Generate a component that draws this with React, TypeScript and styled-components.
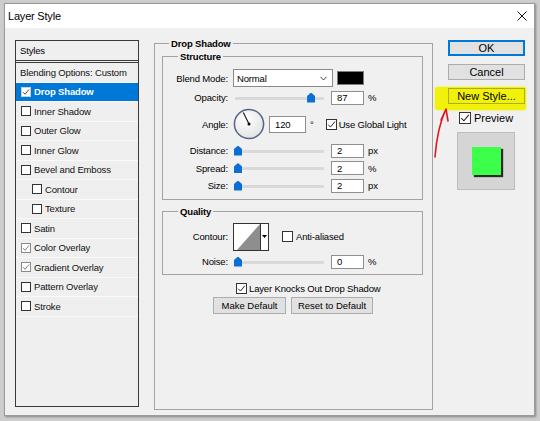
import React from 'react'
import styled, { createGlobalStyle } from 'styled-components'

const GlobalStyle = createGlobalStyle`
  html, body {
    margin: 0;
    padding: 0;
  }
  body {
    width: 540px;
    height: 421px;
    overflow: hidden;
    background: #cdcdcd;
    font-family: 'Liberation Sans', Arial, sans-serif;
    color: #000;
  }
`

const Screen = styled.div`
  position: relative;
  width: 540px;
  height: 421px;
  box-sizing: border-box;
  padding: 3px 0 0 4px;
`

const Dialog = styled.div`
  width: 531px;
  height: 413px;
  box-sizing: border-box;
  border: 1px solid #9a9a9a;
  background: #f0f0f0;
  box-shadow: 1px 1px 2px rgba(0, 0, 0, 0.35);
  display: flex;
  flex-direction: column;
`

const TitleBar = styled.div`
  height: 24px;
  flex: none;
  background: #fff;
  display: flex;
  align-items: center;
  justify-content: space-between;
  padding: 0 7px 0 3px;
  font-size: 11px;
  letter-spacing: -0.2px;
`

const Body = styled.div`
  flex: 1;
  display: flex;
  align-items: stretch;
  gap: 15px;
  padding: 12px 9px 5px 10px;
  font-size: 9.5px;
  letter-spacing: -0.15px;
`

/* ---------- styles list ---------- */

const StylesPanel = styled.div`
  width: 124px;
  flex: none;
  box-sizing: border-box;
  margin-bottom: 3px;
  border: 1px solid #3a3a3a;
  background: #efefef;
  display: flex;
  flex-direction: column;
`

const PanelHeader = styled.div`
  height: 19px;
  flex: none;
  display: flex;
  align-items: center;
  padding-left: 4px;
  border-bottom: 3px double #3a3a3a;
`

const StyleRow = styled.div<{ $selected?: boolean; $indent?: boolean }>`
  height: 19.5px;
  flex: none;
  box-sizing: border-box;
  display: flex;
  align-items: center;
  gap: 3px;
  padding-left: ${p => (p.$indent ? 16 : 5)}px;
  border-bottom: 1px solid #fafafa;
  background: ${p => (p.$selected ? '#0078d7' : 'transparent')};
  color: ${p => (p.$selected ? '#fff' : '#111')};
  font-weight: ${p => (p.$selected ? 700 : 400)};
`

const PlainRow = styled(StyleRow)`
  padding-left: 4px;
`

/* ---------- checkbox ---------- */

type Tone = 'dark' | 'muted' | 'light'

const toneBorder: Record<Tone, string> = { dark: '#333', muted: '#8a8a8a', light: '#cfcfcf' }
const toneCheck: Record<Tone, string> = { dark: '#222', muted: '#707070', light: '#333' }

const Box = styled.span<{ $size: number; $tone: Tone }>`
  width: ${p => p.$size}px;
  height: ${p => p.$size}px;
  flex: none;
  box-sizing: border-box;
  border: 1px solid ${p => toneBorder[p.$tone]};
  background: #fff;
  display: inline-flex;
  align-items: center;
  justify-content: center;
`

const CheckBox: React.FC<{ checked?: boolean; size?: number; tone?: Tone }> = ({
  checked,
  size = 11,
  tone = 'dark',
}) => (
  <Box $size={size} $tone={tone}>
    {checked && (
      <svg width={size - 2} height={size - 2} viewBox="0 0 10 10">
        <polyline points="1.3,5.2 3.9,7.8 8.8,1.8" fill="none" stroke={toneCheck[tone]} strokeWidth="1.1" />
      </svg>
    )}
  </Box>
)

/* ---------- group boxes ---------- */

const Group = styled.fieldset<{ $outer?: boolean }>`
  margin: 0;
  min-width: 0;
  box-sizing: border-box;
  border: 1px solid #a3a3a3;
  padding: ${p => (p.$outer ? '0 9px 0 7px' : '0')};
`

const OuterGroup = styled(Group)`
  width: 279px;
  flex: none;
  margin-top: -3px;
`

const GroupTitle = styled.legend<{ $offset: number }>`
  font-weight: 700;
  font-size: 9.5px;
  line-height: 13px;
  padding: 0 2px;
  margin-left: ${p => p.$offset}px;
`

const Rows = styled.div<{ $gap: number; $pad: string }>`
  display: flex;
  flex-direction: column;
  gap: ${p => p.$gap}px;
  padding: ${p => p.$pad};
`

const Field = styled.div`
  display: grid;
  grid-template-columns: 65px auto;
  column-gap: 5px;
  align-items: center;
`

const Label = styled.span`
  text-align: right;
  white-space: nowrap;
`

const Controls = styled.div<{ $gap?: number }>`
  display: flex;
  align-items: center;
  gap: ${p => p.$gap ?? 4}px;
`

const Select = styled.div`
  width: 100px;
  height: 18px;
  box-sizing: border-box;
  border: 1px solid #8a8a8a;
  background: #fff;
  display: flex;
  align-items: center;
  justify-content: space-between;
  padding: 0 5px 0 3px;
`

const Swatch = styled.span`
  width: 27px;
  height: 14px;
  box-sizing: border-box;
  border: 1px solid #7d7d7d;
  background: #000;
`

const NumberBox = styled.div<{ $w: number; $h: number }>`
  width: ${p => p.$w}px;
  height: ${p => p.$h}px;
  flex: none;
  box-sizing: border-box;
  border: 1px solid #8f8f8f;
  background: #fff;
  display: flex;
  align-items: center;
  padding-left: 5px;
`

const Track = styled.div`
  position: relative;
  width: 91px;
  height: 10px;
  flex: none;
  margin-right: 3px;

  &::before {
    content: '';
    position: absolute;
    left: 2px;
    right: 0;
    top: 4px;
    height: 3px;
    background: #d9d9d9;
  }
`

const Thumb = styled.span`
  position: absolute;
  top: 0;
  width: 8px;
  height: 10px;
  background: #0a6fd3;
  clip-path: polygon(50% 0, 100% 35%, 100% 100%, 0 100%, 0 35%);
`

const Unit = styled.span`
  margin-left: 0;
`

const Slider: React.FC<{ pos: number; value: string; unit: string }> = ({ pos, value, unit }) => (
  <Controls>
    <Track>
      <Thumb style={{ left: 1 + pos * 84 }} />
    </Track>
    <NumberBox $w={33} $h={14}>{value}</NumberBox>
    <Unit>{unit}</Unit>
  </Controls>
)

const Dial = () => (
  <svg width="32" height="32" viewBox="0 0 32 32">
    <defs>
      <radialGradient id="dialFill" cx="40%" cy="35%" r="70%">
        <stop offset="0" stopColor="#ffffff" />
        <stop offset="1" stopColor="#e2e2e2" />
      </radialGradient>
    </defs>
    <circle cx="16" cy="16" r="14.6" fill="url(#dialFill)" stroke="#55648c" strokeWidth="1.5" />
    <line x1="16" y1="16" x2="10.3" y2="4.4" stroke="#111" strokeWidth="1.1" />
    <circle cx="16" cy="16" r="1.5" fill="#000" />
  </svg>
)

const ContourPicker = styled.div`
  width: 36px;
  height: 28px;
  box-sizing: border-box;
  border: 1px solid #333;
  background: #fff;
  display: flex;
`

const ContourArrow = styled.span`
  flex: 1;
  border-left: 1px solid #333;
  display: flex;
  align-items: center;
  justify-content: center;
`

const CheckLabel = styled.label<{ $gap?: number }>`
  display: flex;
  align-items: center;
  gap: ${p => p.$gap ?? 2}px;
  white-space: nowrap;
`

const KnockRow = styled(CheckLabel)`
  margin: 8px 0 0 74px;
`

const ButtonRow = styled.div`
  display: flex;
  gap: 5px;
  margin: 3px 0 0 51px;
`

const SmallButton = styled.button<{ $w: number }>`
  width: ${p => p.$w}px;
  height: 17px;
  padding: 0;
  font: inherit;
  color: #000;
  background: #e1e1e1;
  border: 1px solid #adadad;
`

/* ---------- right column ---------- */

const SideColumn = styled.div`
  width: 77px;
  flex: none;
  display: flex;
  flex-direction: column;
  gap: 8px;
  font-size: 11px;
  letter-spacing: 0;
`

const DialogButton = styled.button<{ $default?: boolean; $marked?: boolean }>`
  width: 77px;
  height: 16px;
  padding: 0;
  font-family: inherit;
  font-size: 11px;
  line-height: 14px;
  color: #000;
  background: ${p => (p.$marked ? 'transparent' : '#e1e1e1')};
  border: 1px solid ${p => (p.$default ? '#0078d7' : p.$marked ? 'rgba(90,90,60,0.45)' : '#adadad')};
  box-shadow: ${p => (p.$default ? 'inset 0 0 0 1px #0078d7' : 'none')};
`

const Marker = styled.div`
  margin: -1px -1px -6px -13px;
  padding: 1px 1px 6px 13px;
  background: #f1f10c;
  border-radius: 3px;
  box-shadow: 0 0 2px #f1f10c;
`

const PreviewRow = styled(CheckLabel)`
  margin-left: 11px;
  gap: 3px;
  height: 12px;
`

const PreviewBox = styled.div`
  width: 58px;
  height: 58px;
  margin-left: 9px;
  box-sizing: border-box;
  border: 1px solid #bdbdbd;
  background: #d5d5d5;
  display: flex;
  align-items: center;
  justify-content: center;
`

const PreviewSquare = styled.span`
  width: 29px;
  height: 28px;
  background: #3cff4a;
  box-shadow: 2px 2px 1px #2a2a2a;
`

const Annotation = styled.svg`
  position: absolute;
  left: 428px;
  top: 104px;
`

const App: React.FC = () => {
  const styleItems: { name: string; checked?: boolean; indent?: boolean; muted?: boolean }[] = [
    { name: 'Inner Shadow' },
    { name: 'Outer Glow' },
    { name: 'Inner Glow' },
    { name: 'Bevel and Emboss' },
    { name: 'Contour', indent: true },
    { name: 'Texture', indent: true },
    { name: 'Satin' },
    { name: 'Color Overlay', checked: true, muted: true },
    { name: 'Gradient Overlay', checked: true, muted: true },
    { name: 'Pattern Overlay' },
    { name: 'Stroke' },
  ]

  return (
    <Screen>
      <GlobalStyle />
      <Dialog>
        <TitleBar>
          <span>Layer Style</span>
          <svg width="10" height="10" viewBox="0 0 10 10">
            <path d="M0.5 0.5 L9.5 9.5 M9.5 0.5 L0.5 9.5" stroke="#111" strokeWidth="1" />
          </svg>
        </TitleBar>

        <Body>
          <StylesPanel>
            <PanelHeader>Styles</PanelHeader>
            <PlainRow>Blending Options: Custom</PlainRow>
            <StyleRow $selected>
              <CheckBox checked size={10} tone="light" />
              Drop Shadow
            </StyleRow>
            {styleItems.map(item => (
              <StyleRow key={item.name} $indent={item.indent}>
                <CheckBox checked={item.checked} size={10} tone={item.muted ? 'muted' : 'dark'} />
                {item.name}
              </StyleRow>
            ))}
          </StylesPanel>

          <OuterGroup $outer>
            <GroupTitle $offset={7}>Drop Shadow</GroupTitle>

            <Group>
              <GroupTitle $offset={15}>Structure</GroupTitle>
              <Rows $gap={3.5} $pad="6px 0 6px">
                <Field>
                  <Label>Blend Mode:</Label>
                  <Controls>
                    <Select>
                      <span>Normal</span>
                      <svg width="7" height="5" viewBox="0 0 7 5">
                        <polyline points="0.5,0.8 3.5,4 6.5,0.8" fill="none" stroke="#444" strokeWidth="1" />
                      </svg>
                    </Select>
                    <Swatch />
                  </Controls>
                </Field>
                <Field>
                  <Label>Opacity:</Label>
                  <Slider pos={0.87} value="87" unit="%" />
                </Field>
                <Field>
                  <Label>Angle:</Label>
                  <Controls>
                    <Dial />
                    <NumberBox $w={37} $h={17}>120</NumberBox>
                    <Unit>°</Unit>
                    <CheckLabel style={{ marginLeft: 8 }}>
                      <CheckBox checked />
                      Use Global Light
                    </CheckLabel>
                  </Controls>
                </Field>
                <Field>
                  <Label>Distance:</Label>
                  <Slider pos={0} value="2" unit="px" />
                </Field>
                <Field>
                  <Label>Spread:</Label>
                  <Slider pos={0} value="2" unit="%" />
                </Field>
                <Field>
                  <Label>Size:</Label>
                  <Slider pos={0} value="2" unit="px" />
                </Field>
              </Rows>
            </Group>

            <Group style={{ marginTop: 5 }}>
              <GroupTitle $offset={15}>Quality</GroupTitle>
              <Rows $gap={4} $pad="5px 0 5px">
                <Field>
                  <Label>Contour:</Label>
                  <Controls $gap={13}>
                    <ContourPicker>
                      <svg width="26" height="26" viewBox="0 0 26 26">
                        <polygon points="3,26 26,0 26,26" fill="#8e8e8e" />
                      </svg>
                      <ContourArrow>
                        <svg width="5" height="3" viewBox="0 0 5 3">
                          <polygon points="0,0 5,0 2.5,3" fill="#000" />
                        </svg>
                      </ContourArrow>
                    </ContourPicker>
                    <CheckLabel $gap={3}>
                      <CheckBox />
                      Anti-aliased
                    </CheckLabel>
                  </Controls>
                </Field>
                <Field>
                  <Label>Noise:</Label>
                  <Slider pos={0} value="0" unit="%" />
                </Field>
              </Rows>
            </Group>

            <KnockRow>
              <CheckBox checked />
              Layer Knocks Out Drop Shadow
            </KnockRow>
            <ButtonRow>
              <SmallButton $w={73}>Make Default</SmallButton>
              <SmallButton $w={82}>Reset to Default</SmallButton>
            </ButtonRow>
          </OuterGroup>

          <SideColumn>
            <DialogButton $default>OK</DialogButton>
            <DialogButton>Cancel</DialogButton>
            <Marker>
              <DialogButton $marked>New Style...</DialogButton>
            </Marker>
            <PreviewRow>
              <CheckBox checked size={12} />
              Preview
            </PreviewRow>
            <PreviewBox>
              <PreviewSquare />
            </PreviewBox>
          </SideColumn>
        </Body>
      </Dialog>

      <Annotation width="24" height="58" viewBox="0 0 24 58">
        <path
          d="M7 53 C8 40 10 22 18 5 M18 5 L13 16 M18 5 L20 17"
          fill="none"
          stroke="#e0161e"
          strokeWidth="1.6"
          strokeLinecap="round"
        />
      </Annotation>
    </Screen>
  )
}

export default App
